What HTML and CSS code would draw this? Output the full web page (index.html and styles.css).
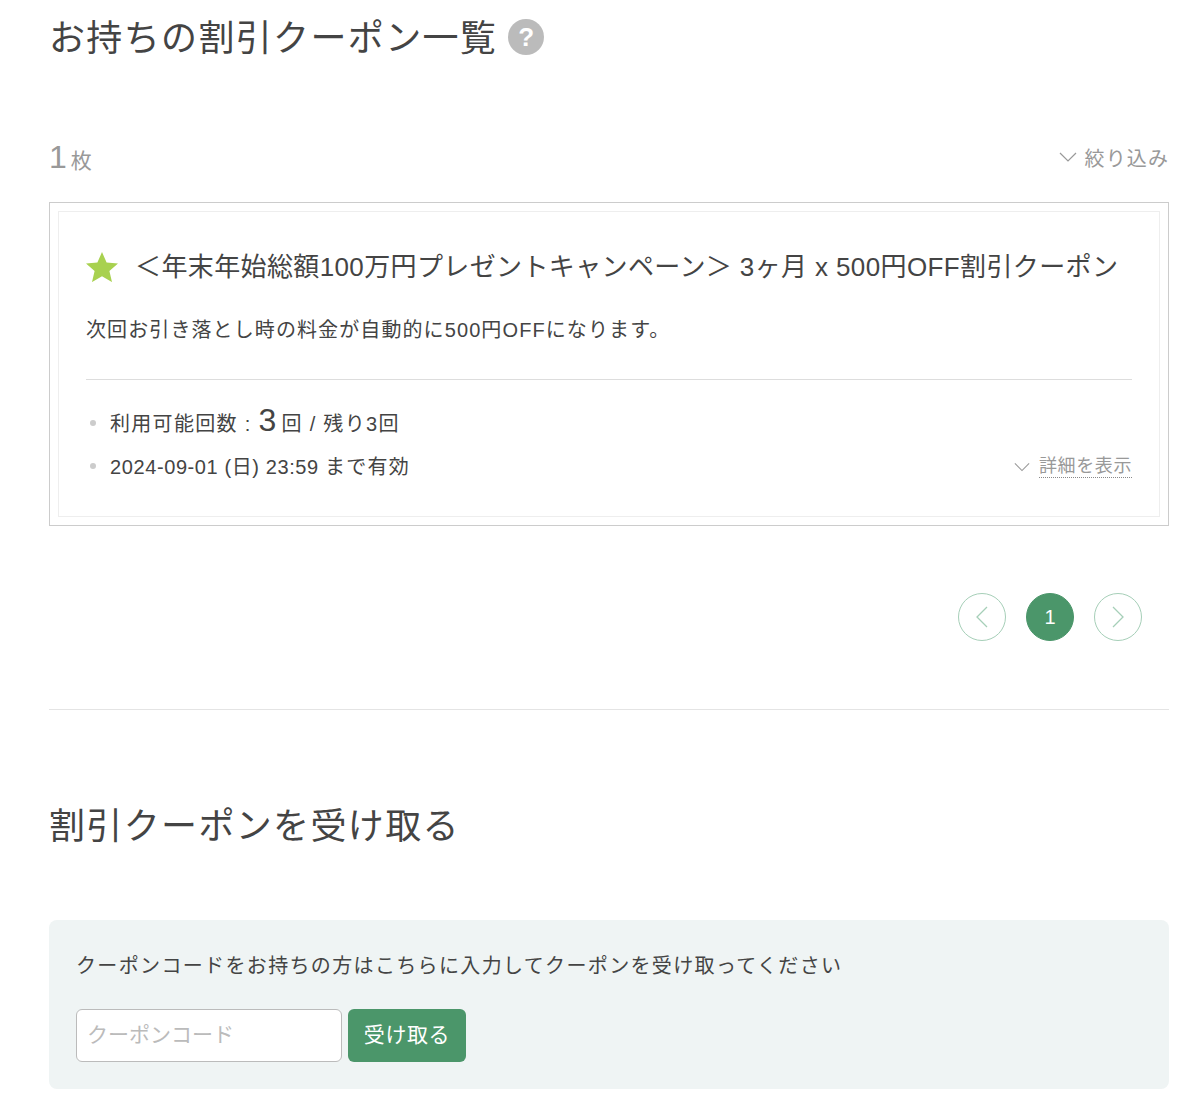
FILE: index.html
```html
<!DOCTYPE html>
<html lang="ja">
<head>
<meta charset="utf-8">
<title>割引クーポン</title>
<link rel="stylesheet" href="styles.css">
</head>
<body>
<main class="page">
  <section class="owned">
    <h1 class="heading">お持ちの割引クーポン一覧<span class="help">?</span></h1>
    <div class="toolbar">
      <p class="count"><span class="count-num">1</span> 枚</p>
      <a class="filter"><svg class="chev" viewBox="0 0 18 10"><path d="M1 1l8 8 8-8"/></svg>絞り込み</a>
    </div>
    <article class="coupon">
      <div class="coupon-inner">
        <h2 class="coupon-title">
          <svg class="star" viewBox="0 0 32 30"><path d="M16 0l4.6 10.6 11.4 1-8.6 7.5 2.6 11L16 24.2 6 30.1l2.6-11L0 11.6l11.4-1z"/></svg>
          <span>＜年末年始総額100万円プレゼントキャンペーン＞ 3ヶ月 x 500円OFF割引クーポン</span>
        </h2>
        <p class="coupon-desc">次回お引き落とし時の料金が自動的に500円OFFになります。</p>
        <div class="coupon-meta">
          <ul class="meta-list">
            <li class="meta-item meta-count">利用可能回数 : <span class="meta-num">3</span>回 / 残り3回</li>
            <li class="meta-item">2024-09-01 (日) 23:59 <span class="meta-jp">まで有効</span></li>
          </ul>
          <a class="details"><svg class="chev chev-sm" viewBox="0 0 18 10"><path d="M1 1l8 8 8-8"/></svg><span class="details-text">詳細を表示</span></a>
        </div>
      </div>
    </article>
    <nav class="pager">
      <a class="page-btn"><svg viewBox="0 0 14 30"><path d="M12 5L2 15l10 10"/></svg></a>
      <a class="page-btn page-current">1</a>
      <a class="page-btn"><svg viewBox="0 0 14 30"><path d="M2 5l10 10L2 25"/></svg></a>
    </nav>
  </section>
  <section class="receive">
    <h1 class="heading">割引クーポンを受け取る</h1>
    <div class="panel">
      <p class="panel-text">クーポンコードをお持ちの方はこちらに入力してクーポンを受け取ってください</p>
      <form class="code-form">
        <input class="code-input" type="text" placeholder="クーポンコード">
        <button class="code-btn" type="button">受け取る</button>
      </form>
    </div>
  </section>
</main>
</body>
</html>
```
FILE: styles.css
```css
* { box-sizing: border-box; }
html, body { margin: 0; background: #fff; }
body {
  color: #444;
  font-family: "Liberation Sans", "Noto Sans CJK JP", sans-serif;
  font-size: 20px;
}
.page { padding: 0 29px 0 49px; }
h1, h2, p, ul { margin: 0; padding: 0; }
.heading {
  display: flex;
  align-items: center;
  font-size: 36px;
  font-weight: 400;
  letter-spacing: 1.35px;
  line-height: 52px;
  padding-top: 13px;
}
.help {
  width: 36px;
  height: 36px;
  margin: -4px 0 0 11px;
  border-radius: 50%;
  background: #bbb;
  color: #fff;
  font-size: 26px;
  font-weight: 700;
  line-height: 36px;
  text-align: center;
  letter-spacing: 0;
}
.toolbar {
  display: flex;
  justify-content: space-between;
  align-items: center;
  margin-top: 70px;
  height: 44px;
  color: #999;
}
.count { font-size: 21px; word-spacing: -2px; }
.count-num { font-size: 32px; font-weight: 400; }
.filter { display: flex; align-items: center; font-size: 20px; letter-spacing: 1.1px; }
.chev {
  width: 18px;
  height: 10px;
  margin-right: 8px;
  fill: none;
  stroke: #999;
  stroke-width: 1.2;
}
.coupon {
  margin-top: 23px;
  border: 1px solid #ccc;
  padding: 8px;
}
.coupon-inner {
  border: 1px solid #eee;
  padding: 33px 27px 0;
  height: 306px;
}
.coupon-title {
  display: flex;
  align-items: center;
  font-size: 26px;
  font-weight: 400;
  letter-spacing: 0.38px;
  line-height: 44px;
  white-space: nowrap;
}
.star { width: 32px; height: 30px; margin-right: 17px; fill: #a8d14f; flex: none; }
.coupon-desc { margin-top: 25px; line-height: 32px; letter-spacing: 1.1px; }
.coupon-meta {
  display: flex;
  justify-content: space-between;
  align-items: flex-end;
  margin-top: 33px;
  padding-top: 22px;
  border-top: 1px solid #ddd;
}
.meta-list { list-style: none; }
.meta-item {
  position: relative;
  padding-left: 24px;
  line-height: 44px;
  letter-spacing: 0.6px;
}
.meta-count { letter-spacing: 1.3px; height: 43px; }
.meta-jp { letter-spacing: 1.3px; }
.meta-item::before {
  content: "";
  position: absolute;
  left: 4px;
  top: 18px;
  width: 6px;
  height: 6px;
  border-radius: 50%;
  background: #ccc;
}
.meta-num { font-size: 32px; line-height: 1; margin-right: 4px; }
.details { display: flex; align-items: center; color: #999; font-size: 18px; letter-spacing: 0.6px; padding-bottom: 11px; }
.details-text { border-bottom: 1px dotted #888; line-height: 22px; }
.chev-sm { width: 16px; margin-right: 9px; }
.pager {
  display: flex;
  justify-content: flex-end;
  gap: 20px;
  margin-top: 67px;
  padding-right: 27px;
  padding-bottom: 68px;
  border-bottom: 1px solid #e4e4e4;
}
.page-btn {
  display: flex;
  align-items: center;
  justify-content: center;
  width: 48px;
  height: 48px;
  border: 1px solid #a6cfb8;
  border-radius: 50%;
}
.page-btn svg { width: 14px; height: 30px; fill: none; stroke: #a6cfb8; stroke-width: 1.3; }
.page-current { background: #4b966a; border-color: #4b966a; color: #fff; font-size: 20px; }
.receive .heading { margin-top: 78px; }
.panel {
  margin-top: 67px;
  background: #eff4f4;
  border-radius: 8px;
  padding: 27px 27px;
  height: 169px;
}
.panel-text { line-height: 38px; letter-spacing: 1.35px; }
.code-form { display: flex; gap: 6px; margin-top: 24px; }
.code-input {
  width: 266px;
  height: 53px;
  padding: 0 10px 2px;
  border: 1px solid #bbb;
  border-radius: 6px;
  background: #fff;
  font: inherit;
  font-size: 21px;
}
.code-input::placeholder { color: #bbb; }
.code-btn {
  width: 118px;
  height: 53px;
  padding: 0 0 5px;
  border: 0;
  border-radius: 6px;
  background: #4b966a;
  color: #fff;
  font: inherit;
  font-size: 21px;
  letter-spacing: 0.6px;
}
```
